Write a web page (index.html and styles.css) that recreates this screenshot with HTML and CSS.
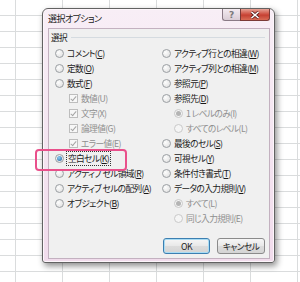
FILE: index.html
```html
<!DOCTYPE html>
<html lang="ja">
<head>
  <meta charset="UTF-8" />
  <title>選択オプション</title>
  <link rel="stylesheet" href="styles.css">
</head>
<body>
  <div class="dialog">
    <div class="titlebar">
      <span class="title">選択オプション</span>
      <div class="caption-buttons">
        <span class="cap-btn help">?</span>
        <span class="cap-btn close">
          <svg width="10" height="8" viewBox="0 0 10 8"><path d="M1.5 1 L8.5 7 M8.5 1 L1.5 7" stroke="#5a1d1d" stroke-width="3" /><path d="M1.5 1 L8.5 7 M8.5 1 L1.5 7" stroke="#fff" stroke-width="1.6" /></svg>
        </span>
      </div>
    </div>

    <div class="client">
      <div class="group-head">
        <span>選択</span>
        <span class="group-line"></span>
      </div>

      <div class="columns">
        <div class="col">
          <div class="opt"><span class="radio"></span><span>コメント(<u>C</u>)</span></div>
          <div class="opt"><span class="radio"></span><span>定数(<u>O</u>)</span></div>
          <div class="opt"><span class="radio"></span><span>数式(<u>F</u>)</span></div>
          <div class="opt sub dim"><span class="check"></span><span>数値(U)</span></div>
          <div class="opt sub dim"><span class="check"></span><span>文字(X)</span></div>
          <div class="opt sub dim"><span class="check"></span><span>論理値(G)</span></div>
          <div class="opt sub dim"><span class="check"></span><span>エラー値(E)</span></div>
          <div class="opt"><span class="radio on"></span><span class="focus">空白セル(<u>K</u>)</span></div>
          <div class="opt"><span class="radio"></span><span>アクティブ セル領域(<u>R</u>)</span></div>
          <div class="opt"><span class="radio"></span><span>アクティブ セルの配列(<u>A</u>)</span></div>
          <div class="opt"><span class="radio"></span><span>オブジェクト(<u>B</u>)</span></div>
        </div>
        <div class="col">
          <div class="opt"><span class="radio"></span><span>アクティブ行との相違(<u>W</u>)</span></div>
          <div class="opt"><span class="radio"></span><span>アクティブ列との相違(<u>M</u>)</span></div>
          <div class="opt"><span class="radio"></span><span>参照元(<u>P</u>)</span></div>
          <div class="opt"><span class="radio"></span><span>参照先(<u>D</u>)</span></div>
          <div class="opt sub-r dim"><span class="radio on"></span><span>1 レベルのみ(I)</span></div>
          <div class="opt sub-r dim"><span class="radio"></span><span>すべてのレベル(L)</span></div>
          <div class="opt"><span class="radio"></span><span>最後のセル(<u>S</u>)</span></div>
          <div class="opt"><span class="radio"></span><span>可視セル(<u>Y</u>)</span></div>
          <div class="opt"><span class="radio"></span><span>条件付き書式(<u>T</u>)</span></div>
          <div class="opt"><span class="radio"></span><span>データの入力規則(<u>V</u>)</span></div>
          <div class="opt sub-r dim"><span class="radio on"></span><span>すべて(L)</span></div>
          <div class="opt sub-r dim"><span class="radio"></span><span>同じ入力規則(E)</span></div>
        </div>
      </div>

      <div class="footer">
        <button class="btn default">OK</button>
        <button class="btn">キャンセル</button>
      </div>
    </div>
  </div>

  <div class="highlight"></div>
</body>
</html>
```

FILE: styles.css
```css
html, body {
  height: 100%;
}
body {
  margin: 0;
  position: relative;
  overflow: hidden;
  font-family: "Noto Sans CJK JP", "Noto Sans", sans-serif;
  font-size: 8.7px;
  letter-spacing: -0.6px;
  font-feature-settings: "palt";
  color: #1a1a1a;
  background-color: #fff;
  background-image:
    linear-gradient(to right, #dadcdd 1px, transparent 1px),
    linear-gradient(to bottom, #dadcdd 1px, transparent 1px);
  background-size: 47px 16px;
  background-position: 15px 15px;
}

.dialog {
  position: absolute;
  left: 42px;
  top: 8px;
  width: 233px;
  height: 255px;
  box-sizing: border-box;
  display: flex;
  flex-direction: column;
  border: 1px solid #626262;
  border-radius: 6px 6px 3px 3px;
  background: linear-gradient(to bottom, #f8eef6, #f1dcec);
  box-shadow: inset 0 0 0 1px #fdf6fb, 2px 3px 6px rgba(0, 0, 0, 0.45);
}

.titlebar {
  height: 19px;
  display: flex;
  justify-content: space-between;
  align-items: flex-start;
}
.title {
  padding: 3px 0 0 5px;
  line-height: 13px;
  font-size: 9px;
  color: #222;
}
.caption-buttons {
  display: flex;
  margin-right: 4px;
}
.cap-btn {
  height: 12px;
  box-sizing: border-box;
  display: flex;
  align-items: center;
  justify-content: center;
  border: 1px solid #8a7a86;
  border-top: none;
}
.help {
  width: 18px;
  border-right: none;
  border-radius: 0 0 0 3px;
  background: linear-gradient(to bottom, #f3eaf0, #d9ccd5);
  color: #7a7a7a;
  font-family: "DejaVu Sans", sans-serif;
  font-size: 9px;
  font-weight: bold;
  letter-spacing: 0;
}
.close {
  width: 30px;
  border-radius: 0 0 3px 0;
  border-color: #7b3a36;
  background: linear-gradient(to bottom, #e7a396, #cc4a3c 50%, #c23c2f 51%, #d96b55);
}

.client {
  flex: 1;
  margin: 0 4px 3px 5px;
  display: flex;
  flex-direction: column;
  border: 1px solid #c3b1c0;
  background: #f0f0f0;
}

.group-head {
  height: 17px;
  display: flex;
  align-items: center;
  gap: 4px;
  padding: 0 4px 0 2px;
}
.group-line {
  flex: 1;
  height: 1px;
  background: #d5dbe0;
}

.columns {
  display: grid;
  grid-template-columns: 107px 1fr;
  padding-left: 6px;
}
.opt {
  height: 15px;
  display: flex;
  align-items: center;
  gap: 3px;
  white-space: nowrap;
}
.opt u {
  text-decoration-thickness: 1px;
  text-underline-offset: 1px;
}
.sub {
  padding-left: 14px;
}
.sub-r {
  padding-left: 12px;
}
.dim {
  color: #8e8e8e;
}

.radio {
  flex: none;
  width: 9px;
  height: 9px;
  box-sizing: border-box;
  border-radius: 50%;
  border: 1px solid #9b9fa3;
  background: radial-gradient(circle at 35% 35%, #fdfdfd, #dcdcdc);
  display: flex;
  align-items: center;
  justify-content: center;
}
.radio.on::after {
  content: "";
  width: 5px;
  height: 5px;
  border-radius: 50%;
  background: radial-gradient(circle at 40% 35%, #8ecdf4, #1e5f9a);
}
.dim .radio {
  border-color: #c9c9c9;
  background: #f5f5f5;
}
.dim .radio.on::after {
  background: #b4b4b4;
}

.check {
  flex: none;
  width: 9px;
  height: 9px;
  box-sizing: border-box;
  border: 1px solid #bdbdbd;
  background: #f7f7f7;
  display: flex;
  align-items: center;
  justify-content: center;
}
.check::after {
  content: "";
  width: 2px;
  height: 5px;
  margin-top: -2px;
  border: solid #a5a5a5;
  border-width: 0 1px 1px 0;
  transform: rotate(40deg);
}

.focus {
  outline: 1px dotted #333;
  outline-offset: 0;
  padding: 0 1px;
}

.footer {
  margin-top: auto;
  display: flex;
  justify-content: flex-end;
  gap: 7px;
  padding: 0 4px 4px 0;
}
.btn {
  width: 48px;
  height: 16px;
  padding: 0;
  font: inherit;
  letter-spacing: inherit;
  color: #1a1a1a;
  border: 1px solid #8b8b8b;
  border-radius: 3px;
  background: linear-gradient(to bottom, #f6f6f6, #e8e8e8 50%, #dcdcdc 51%, #d4d4d4);
}
.btn.default {
  width: 47px;
  border-color: #3c7fb1;
  box-shadow: inset 0 0 0 1px #a9dcf4;
}

.highlight {
  position: absolute;
  left: 35px;
  top: 149px;
  width: 92px;
  height: 22px;
  box-sizing: border-box;
  border: 2px solid #e9508b;
  border-radius: 4px;
}
```
